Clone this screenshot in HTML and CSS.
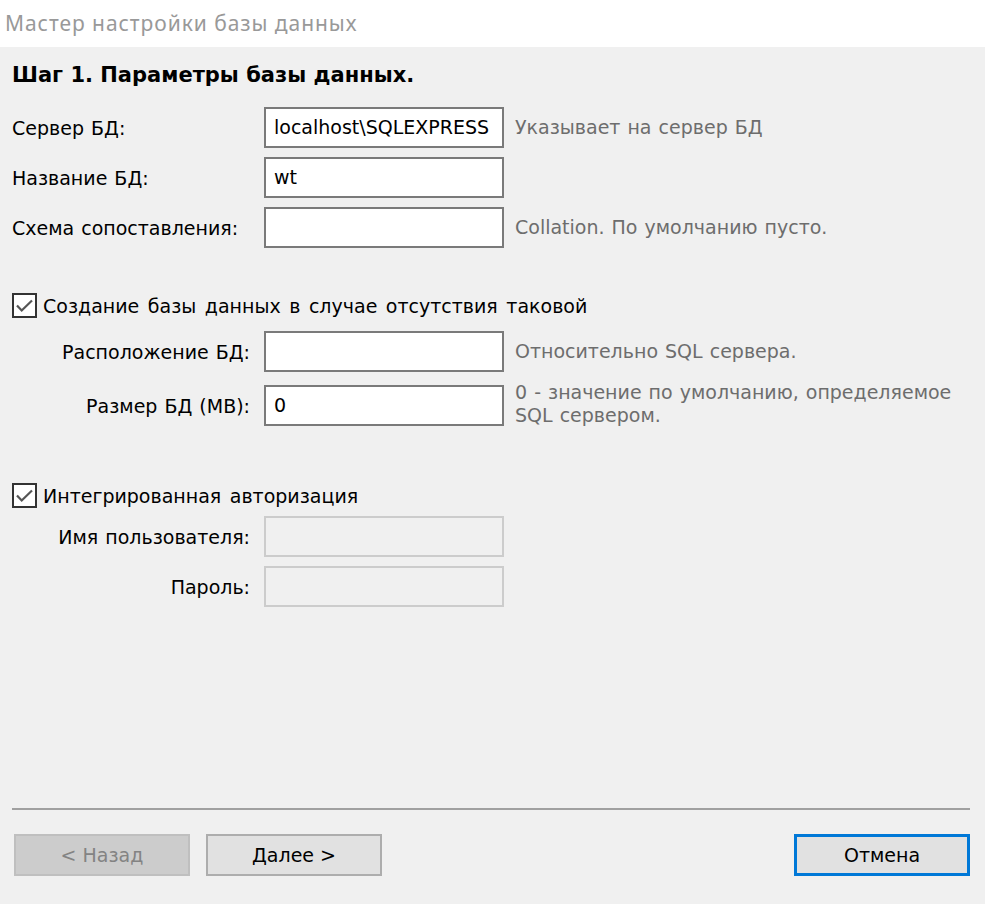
FILE: index.html
```html
<!DOCTYPE html>
<html lang="ru">
<head>
<meta charset="utf-8">
<title>Мастер настройки базы данных</title>
<link rel="stylesheet" href="styles.css">
</head>
<body>
<div class="window">
  <header class="titlebar">Мастер настройки базы данных</header>
  <main class="content">
    <h1 class="step">Шаг 1. Параметры базы данных.</h1>

    <div class="form form-main">
      <label class="lbl">Сервер БД:</label>
      <div class="field">localhost\SQLEXPRESS</div>
      <div class="hint">Указывает на сервер БД</div>

      <label class="lbl">Название БД:</label>
      <div class="field">wt</div>
      <div class="hint"></div>

      <label class="lbl">Схема сопоставления:</label>
      <div class="field"></div>
      <div class="hint">Collation. По умолчанию пусто.</div>
    </div>

    <div class="check check-create">
      <svg class="box" width="25" height="25" viewBox="0 0 25 25"><rect x="1" y="1" width="23" height="23" fill="#fff" stroke="#333" stroke-width="2"/><polyline points="5,12.5 9.7,17.5 20,7.5" fill="none" stroke="#555" stroke-width="2.2"/></svg>
      <span>Создание базы данных в случае отсутствия таковой</span>
    </div>

    <div class="form form-sub form-create">
      <label class="lbl lbl-right">Расположение БД:</label>
      <div class="field"></div>
      <div class="hint">Относительно SQL сервера.</div>

      <label class="lbl lbl-right">Размер БД (MB):</label>
      <div class="field">0</div>
      <div class="hint hint-top">0 - значение по умолчанию, определяемое SQL сервером.</div>
    </div>

    <div class="check check-auth">
      <svg class="box" width="25" height="25" viewBox="0 0 25 25"><rect x="1" y="1" width="23" height="23" fill="#fff" stroke="#333" stroke-width="2"/><polyline points="5,12.5 9.7,17.5 20,7.5" fill="none" stroke="#555" stroke-width="2.2"/></svg>
      <span>Интегрированная авторизация</span>
    </div>

    <div class="form form-sub form-auth">
      <label class="lbl lbl-right">Имя пользователя:</label>
      <div class="field disabled"></div>
      <div class="hint"></div>

      <label class="lbl lbl-right">Пароль:</label>
      <div class="field disabled"></div>
      <div class="hint"></div>
    </div>
  </main>
  <footer class="footer">
    <div class="separator"></div>
    <div class="buttons">
      <button class="btn btn-disabled" disabled>&lt; Назад</button>
      <button class="btn btn-next">Далее &gt;</button>
      <button class="btn btn-cancel">Отмена</button>
    </div>
  </footer>
</div>
</body>
</html>
```

FILE: styles.css
```css
html, body {
  margin: 0;
  padding: 0;
  background: #f0f0f0;
}

.window {
  width: 985px;
  height: 904px;
  display: flex;
  flex-direction: column;
  background: #f0f0f0;
  font-family: "DejaVu Sans", Verdana, sans-serif;
  font-size: 19px;
  word-spacing: 1px;
  color: #000;
  overflow: hidden;
}

.titlebar {
  height: 47px;
  box-sizing: border-box;
  background: #fff;
  color: #999;
  font-family: "Noto Sans", "Open Sans", sans-serif;
  font-size: 21px;
  letter-spacing: 0.95px;
  word-spacing: 0;
  line-height: 47px;
  padding-left: 5px;
}

.content {
  flex: 1;
  display: flex;
  flex-direction: column;
  padding: 0 0 0 12px;
}

.step {
  margin: 12px 0 0 0;
  font-size: 21px;
  font-weight: bold;
  word-spacing: 0;
  line-height: 32px;
  height: 32px;
}

.form {
  display: grid;
  grid-template-columns: 252px 240px 1fr;
  grid-auto-rows: 41px;
  row-gap: 9px;
  align-items: center;
}

.form-main {
  margin-top: 16px;
}

.lbl {
  white-space: nowrap;
}

.lbl-right {
  text-align: right;
  padding-right: 14px;
}

.field {
  box-sizing: border-box;
  height: 41px;
  border: 2px solid #7a7a7a;
  background: #fff;
  padding: 0 8px;
  line-height: 37px;
  white-space: nowrap;
  overflow: hidden;
}

.field.disabled {
  border-color: #cccccc;
  background: #f0f0f0;
}

.hint {
  color: #6d6d6d;
  padding-left: 11px;
  line-height: 23px;
}

.hint-top {
  align-self: start;
  margin-top: -4px;
  width: 450px;
}

.check {
  display: flex;
  align-items: center;
  height: 25px;
  gap: 6px;
}

.check span {
  word-spacing: 2.5px;
}

.check .box {
  flex: none;
  display: block;
}

.check-create {
  margin-top: 45px;
}

.form-create {
  margin-top: 13px;
  row-gap: 13px;
}

.check-auth {
  margin-top: 57px;
}

.form-auth {
  margin-top: 8px;
}

.footer {
  padding: 0 15px 28px 12px;
}

.separator {
  height: 2px;
  background: #a0a0a0;
  margin-bottom: 24px;
}

.buttons {
  display: flex;
  align-items: center;
  gap: 16px;
  padding-left: 2px;
}

.btn {
  box-sizing: border-box;
  width: 176px;
  height: 42px;
  font-family: "DejaVu Sans", Verdana, sans-serif;
  font-size: 19px;
  background: #e1e1e1;
  border: 2px solid #adadad;
  color: #000;
  padding: 0;
  margin: 0;
}

.btn-disabled {
  background: #cccccc;
  border-color: #bfbfbf;
  color: #838383;
}

.btn-cancel {
  margin-left: auto;
  border: 3px solid #0078d7;
}
```
